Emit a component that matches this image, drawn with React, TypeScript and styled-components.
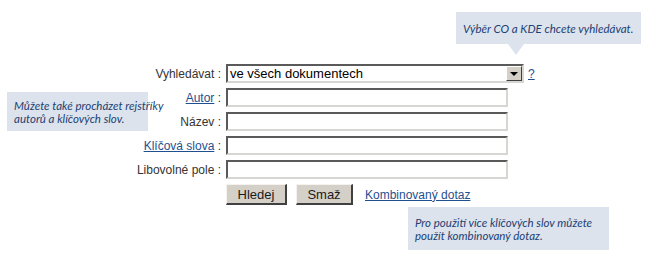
import React from 'react'
import styled, { createGlobalStyle } from 'styled-components'

const GlobalStyle = createGlobalStyle`
  html, body {
    margin: 0;
    padding: 0;
    background: #ffffff;
  }
  body {
    font-family: 'Liberation Sans', Arial, sans-serif;
  }
`

const Page = styled.div`
  position: relative;
  width: 650px;
  height: 259px;
  overflow: hidden;
  background: #ffffff;
`

const SearchForm = styled.form`
  display: grid;
  grid-template-columns: 221px auto;
  column-gap: 5px;
  row-gap: 5px;
  align-items: center;
  padding-top: 64px;
  margin: 0;
`

const Label = styled.div`
  text-align: right;
  font-size: 12px;
  color: #333333;
  white-space: nowrap;
`

const LabelLink = styled.a`
  color: #1f4f8f;
  text-decoration: underline;
`

const FieldRow = styled.div`
  display: flex;
  align-items: center;
  gap: 4px;
`

const TextInput = styled.input`
  box-sizing: border-box;
  width: 282px;
  height: 19px;
  margin: 0;
  padding: 0 3px;
  border-style: solid;
  border-width: 2px;
  border-color: #5a5a5a #d8d6d0 #d8d6d0 #5a5a5a;
  background: #ffffff;
  font-family: 'Liberation Sans', Arial, sans-serif;
  font-size: 13px;
`

const SelectBox = styled.div`
  box-sizing: border-box;
  width: 298px;
  height: 19px;
  display: flex;
  align-items: center;
  border-style: solid;
  border-width: 2px;
  border-color: #5a5a5a #d8d6d0 #d8d6d0 #5a5a5a;
  background: #ffffff;
`

const SelectValue = styled.span`
  flex: 1;
  padding-left: 2px;
  font-size: 13px;
  color: #000000;
  white-space: nowrap;
`

const DropButton = styled.span`
  box-sizing: border-box;
  width: 16px;
  height: 15px;
  display: flex;
  align-items: center;
  justify-content: center;
  background: #d4d0c8;
  border-style: solid;
  border-width: 1px;
  border-color: #ffffff #404040 #404040 #ffffff;
`

const Arrow = styled.span`
  width: 0;
  height: 0;
  border-left: 4px solid transparent;
  border-right: 4px solid transparent;
  border-top: 4px solid #000000;
`

const HelpLink = styled.a`
  font-size: 12px;
  color: #1f4f8f;
  text-decoration: underline;
`

const ActionRow = styled.div`
  grid-column: 2;
  display: flex;
  align-items: center;
`

const Button = styled.button<{ $width: number }>`
  box-sizing: border-box;
  width: ${(p) => p.$width}px;
  height: 21px;
  margin: 0 9px 0 0;
  padding: 0;
  background: #d4d0c8;
  border-style: solid;
  border-width: 1px 2px 2px 1px;
  border-color: #f4f3ef #404040 #404040 #f4f3ef;
  font-family: 'Liberation Sans', Arial, sans-serif;
  font-size: 13px;
  font-weight: 400;
  color: #1a1a1a;
`

const ComboLink = styled.a`
  margin-left: 3px;
  font-size: 12px;
  color: #1f4f8f;
  text-decoration: underline;
`

const Tip = styled.div<{ $left: number; $top: number; $width: number; $height: number; $pointer?: boolean }>`
  position: absolute;
  left: ${(p) => p.$left}px;
  top: ${(p) => p.$top}px;
  width: ${(p) => p.$width}px;
  height: ${(p) => p.$height}px;
  box-sizing: border-box;
  padding: 0 7px;
  display: flex;
  flex-direction: column;
  justify-content: center;
  background: #dce3ed;
  font-family: Lato, 'Open Sans', sans-serif;
  font-style: italic;
  font-size: 11.5px;
  line-height: 13px;
  color: #1d3f73;
  white-space: nowrap;

  &::after {
    content: '';
    display: ${(p) => (p.$pointer ? 'block' : 'none')};
    position: absolute;
    left: 52px;
    top: 100%;
    width: 0;
    height: 0;
    border-left: 8px solid transparent;
    border-right: 8px solid transparent;
    border-top: 11px solid #dce3ed;
  }
`

const fields = [
  { label: 'Autor', link: true },
  { label: 'Název', link: false },
  { label: 'Klíčová slova', link: true },
  { label: 'Libovolné pole', link: false },
]

export default function App() {
  return (
    <Page>
      <GlobalStyle />
      <SearchForm onSubmit={(e) => e.preventDefault()}>
        <Label>Vyhledávat :</Label>
        <FieldRow>
          <SelectBox>
            <SelectValue>ve všech dokumentech</SelectValue>
            <DropButton>
              <Arrow />
            </DropButton>
          </SelectBox>
          <HelpLink href="#">?</HelpLink>
        </FieldRow>

        {fields.map((f) => (
          <React.Fragment key={f.label}>
            <Label>
              {f.link ? <LabelLink href="#">{f.label}</LabelLink> : f.label} :
            </Label>
            <FieldRow>
              <TextInput type="text" />
            </FieldRow>
          </React.Fragment>
        ))}

        <ActionRow>
          <Button type="submit" $width={61}>Hledej</Button>
          <Button type="button" $width={57}>Smaž</Button>
          <ComboLink href="#">Kombinovaný dotaz</ComboLink>
        </ActionRow>
      </SearchForm>

      <Tip $left={456} $top={12} $width={185} $height={32} $pointer>
        <span>Výběr CO a KDE chcete vyhledávat.</span>
      </Tip>
      <Tip $left={7} $top={92} $width={141} $height={39}>
        <span>Můžete také procházet rejstříky</span>
        <span>autorů a klíčových slov.</span>
      </Tip>
      <Tip $left={408} $top={207} $width={201} $height={43}>
        <span>Pro použití více klíčových slov můžete</span>
        <span>použít kombinovaný dotaz.</span>
      </Tip>
    </Page>
  )
}
